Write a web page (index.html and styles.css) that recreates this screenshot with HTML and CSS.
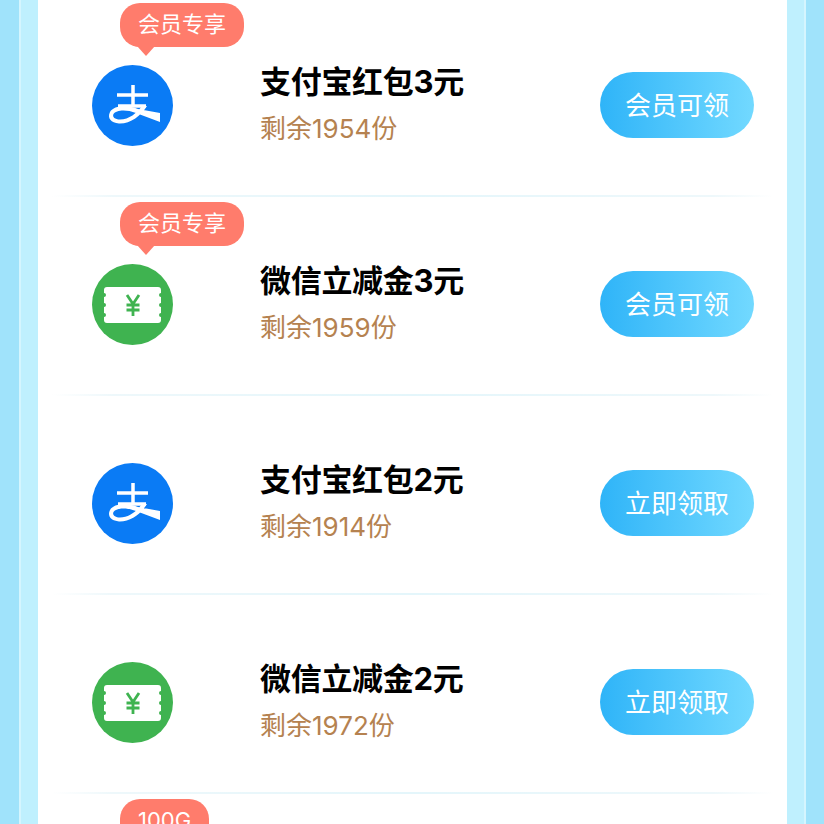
FILE: index.html
```html
<!DOCTYPE html>
<html>
  <head>
    <title>领取红包</title>
    <meta charset="UTF-8" />
    <link rel="stylesheet" href="styles.css">
  </head>

  <body>
    <div class="frame">
      <div class="inner">
        <div class="list">
          <div class="row">
            <div class="badge">会员专享</div>
            <svg class="icon" viewBox="0 0 81 81">
              <circle cx="40.5" cy="40.5" r="40.5" fill="#0a7bf5" />
              <path d="M25 30H56M41 20V41M26 41H54" fill="none" stroke="#fff" stroke-width="3.5" />
              <path d="M68 48V57L44 48C34 44 24 45 21.500 49C20 52 23 54.500 28 54.500C37 54.500 45 48 50 41H55C49 51 38 59 27 58.500C19 58 15 53 18 47C22 40 36 40 46 44Z" fill="#fff" />
            </svg>
            <div class="info">
              <div class="name">支付宝红包3元</div>
              <div class="left">剩余1954份</div>
            </div>
            <button class="btn">会员可领</button>
          </div>
          <div class="row">
            <div class="badge">会员专享</div>
            <svg class="icon" viewBox="0 0 81 81">
              <circle cx="40.5" cy="40.5" r="40.5" fill="#3fb350" />
              <path d="M15 23H66Q69 23 69 26V29A2 2 0 0 0 69 33V39A2 2 0 0 0 69 43V49A2 2 0 0 0 69 53V56Q69 59 66 59H15Q12 59 12 56V53A2 2 0 0 0 12 49V43A2 2 0 0 0 12 39V33A2 2 0 0 0 12 29V26Q12 23 15 23Z" fill="#fff" />
              <path d="M35 31L41 40L47 31M34.500 41H47.500M34.500 46H47.500M41 40V52" fill="none" stroke="#3fb350" stroke-width="2.800" />
            </svg>
            <div class="info">
              <div class="name">微信立减金3元</div>
              <div class="left">剩余1959份</div>
            </div>
            <button class="btn">会员可领</button>
          </div>
          <div class="row">
            <svg class="icon" viewBox="0 0 81 81">
              <circle cx="40.5" cy="40.5" r="40.5" fill="#0a7bf5" />
              <path d="M25 30H56M41 20V41M26 41H54" fill="none" stroke="#fff" stroke-width="3.5" />
              <path d="M68 48V57L44 48C34 44 24 45 21.500 49C20 52 23 54.500 28 54.500C37 54.500 45 48 50 41H55C49 51 38 59 27 58.500C19 58 15 53 18 47C22 40 36 40 46 44Z" fill="#fff" />
            </svg>
            <div class="info">
              <div class="name">支付宝红包2元</div>
              <div class="left">剩余1914份</div>
            </div>
            <button class="btn">立即领取</button>
          </div>
          <div class="row">
            <svg class="icon" viewBox="0 0 81 81">
              <circle cx="40.5" cy="40.5" r="40.5" fill="#3fb350" />
              <path d="M15 23H66Q69 23 69 26V29A2 2 0 0 0 69 33V39A2 2 0 0 0 69 43V49A2 2 0 0 0 69 53V56Q69 59 66 59H15Q12 59 12 56V53A2 2 0 0 0 12 49V43A2 2 0 0 0 12 39V33A2 2 0 0 0 12 29V26Q12 23 15 23Z" fill="#fff" />
              <path d="M35 31L41 40L47 31M34.500 41H47.500M34.500 46H47.500M41 40V52" fill="none" stroke="#3fb350" stroke-width="2.800" />
            </svg>
            <div class="info">
              <div class="name">微信立减金2元</div>
              <div class="left">剩余1972份</div>
            </div>
            <button class="btn">立即领取</button>
          </div>
          <div class="row">
            <div class="badge badge-small">100G</div>
          </div>
        </div>
      </div>
    </div>
  </body>
</html>
```

FILE: styles.css
```css
* {
  box-sizing: border-box;
  margin: 0;
  padding: 0;
}

html,
body {
  height: 100%;
  overflow: hidden;
}

body {
  background: #a0e3fb;
  font-family: Inter, "Noto Sans CJK SC", sans-serif;
}

.frame {
  height: 100%;
  margin: 0 18px 0 19px;
  padding: 0 17px;
  background: #bff0fe;
  border-left: 2px solid #d5f5fe;
  border-right: 2px solid #d5f5fe;
}

.inner {
  height: 100%;
  background: #fff;
  overflow: hidden;
}

.list {
  margin-top: -2px;
}

.row {
  position: relative;
  height: 199px;
  padding: 17px 0 0 54px;
  display: flex;
  align-items: center;
  border-bottom: 2px solid;
  border-image: linear-gradient(90deg, #fff 2%, #eef8fb 10%, #e4f6fb 50%, #eef8fb 90%, #fff 98%) 1;
}

.badge {
  position: absolute;
  left: 82px;
  top: 5px;
  width: 124px;
  height: 44px;
  border-radius: 20px;
  background: #ff7c6c;
  color: #fff;
  font-size: 22px;
  line-height: 43px;
  text-align: center;
}

.badge::after {
  content: "";
  position: absolute;
  left: 17px;
  top: 43px;
  border-top: 10px solid #ff7c6c;
  border-left: 9px solid transparent;
  border-right: 9px solid transparent;
}

.badge-small {
  width: 89px;
}

.icon {
  width: 81px;
  height: 81px;
  flex: none;
}

.info {
  margin-left: 87px;
  flex: 1;
}

.name {
  font-size: 31px;
  line-height: 44px;
  letter-spacing: -0.3px;
  font-weight: 700;
  color: #000;
  margin-top: 1px;
}

.left {
  font-size: 26px;
  line-height: 44px;
  margin-top: 3px;
  color: #b58250;
}

.btn {
  width: 154px;
  height: 66px;
  margin-right: 33px;
  padding-bottom: 3px;
  border: none;
  border-radius: 33px;
  background: linear-gradient(90deg, #2fb4f8, #72d9ff);
  color: #fff;
  font-family: inherit;
  font-size: 26px;
}
```
